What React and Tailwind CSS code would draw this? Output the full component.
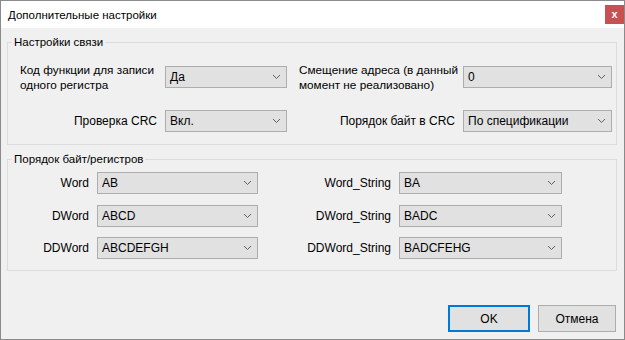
import React from 'react';

const font = { fontFamily: '"Liberation Sans", Arial, sans-serif' };

function Chevron() {
  return (
    <svg width="9" height="6" viewBox="0 0 9 6" className="shrink-0">
      <polyline points="1,1 4.5,4.5 8,1" fill="none" stroke="#606060" strokeWidth="1" />
    </svg>
  );
}

function Combo({ value, width }) {
  return (
    <div
      className={`flex h-[22px] items-center justify-between border border-[#adadad] bg-[#e1e1e1] pl-[4px] pr-[5px] text-[12px] text-black ${width}`}
    >
      <span className="whitespace-nowrap leading-4">{value}</span>
      <Chevron />
    </div>
  );
}

function Group({ title, children, className }) {
  return (
    <fieldset className={`border border-[#dcdcdc] px-0 ${className}`}>
      <legend className="ml-[4px] px-[2px] text-[11.5px] leading-4 text-black">{title}</legend>
      {children}
    </fieldset>
  );
}

function ByteRow({ label, value, rlabel, rvalue }) {
  return (
    <div className="flex h-[22px] items-center">
      <div className="w-[80px] whitespace-nowrap text-right text-[12px] leading-4">{label}</div>
      <div className="ml-[8px]">
        <Combo value={value} width="w-[161px]" />
      </div>
      <div className="ml-[8px] w-[125px] whitespace-nowrap text-right text-[12px] leading-4">{rlabel}</div>
      <div className="ml-[8px]">
        <Combo value={rvalue} width="w-[163px]" />
      </div>
    </div>
  );
}

export default function App() {
  return (
    <div className="h-[340px] w-[625px] bg-white" style={font}>
      <div className="flex h-[340px] w-[625px] flex-col border border-[#8a8a8a] bg-[#f0f0f0] text-black">
        {/* title bar */}
        <div className="flex h-[27px] items-start justify-between bg-white">
          <span className="mt-[6px] ml-[7px] whitespace-nowrap text-[11.5px] leading-4">Дополнительные настройки</span>
          <div className="mt-[4px] flex h-[19px] w-[19px] items-center justify-center bg-[#c75050] text-[11px] font-bold leading-none text-white">
            x
          </div>
        </div>

        <div className="flex flex-1 flex-col pl-[6px] pr-[7px]">
          <Group title="Настройки связи" className="mt-[6px] pb-[12px]">
            <div className="flex flex-col gap-[18px] pl-[12px] pt-[12px]">
              <div className="flex h-[30px] items-center">
                <div className="w-[137px] whitespace-nowrap text-[11.75px] leading-[15px]">
                  Код функции для записи<br />одного регистра
                </div>
                <div className="ml-[8px]">
                  <Combo value="Да" width="w-[122px]" />
                </div>
                <div className="ml-[12px] w-[156px] whitespace-nowrap text-[11.75px] leading-[15px]">
                  Смещение адреса (в данный<br />момент не реализовано)
                </div>
                <div className="ml-[8px]">
                  <Combo value="0" width="w-[149px]" />
                </div>
              </div>
              <div className="flex h-[22px] items-center">
                <div className="w-[137px] whitespace-nowrap text-right text-[12px] leading-4">Проверка CRC</div>
                <div className="ml-[8px]">
                  <Combo value="Вкл." width="w-[122px]" />
                </div>
                <div className="ml-[12px] w-[156px] whitespace-nowrap text-right text-[12px] leading-4">Порядок байт в CRC</div>
                <div className="ml-[8px]">
                  <Combo value="По спецификации" width="w-[149px]" />
                </div>
              </div>
            </div>
          </Group>

          <Group title="Порядок байт/регистров" className="mt-[6px] pb-[11px]">
            <div className="flex flex-col gap-[10.5px] pl-[1px] pt-[5px]">
              <ByteRow label="Word" value="AB" rlabel="Word_String" rvalue="BA" />
              <ByteRow label="DWord" value="ABCD" rlabel="DWord_String" rvalue="BADC" />
              <ByteRow label="DDWord" value="ABCDEFGH" rlabel="DDWord_String" rvalue="BADCFEHG" />
            </div>
          </Group>
        </div>

        <div className="flex justify-end gap-[8px] pb-[7px] pr-[8px]">
          <button className="h-[27px] w-[82px] border-2 border-[#0078d7] bg-[#e1e1e1] text-[12px] leading-4">
            OK
          </button>
          <button className="h-[27px] w-[78px] border border-[#adadad] bg-[#e1e1e1] text-[12px] leading-4">
            Отмена
          </button>
        </div>
      </div>
    </div>
  );
}
